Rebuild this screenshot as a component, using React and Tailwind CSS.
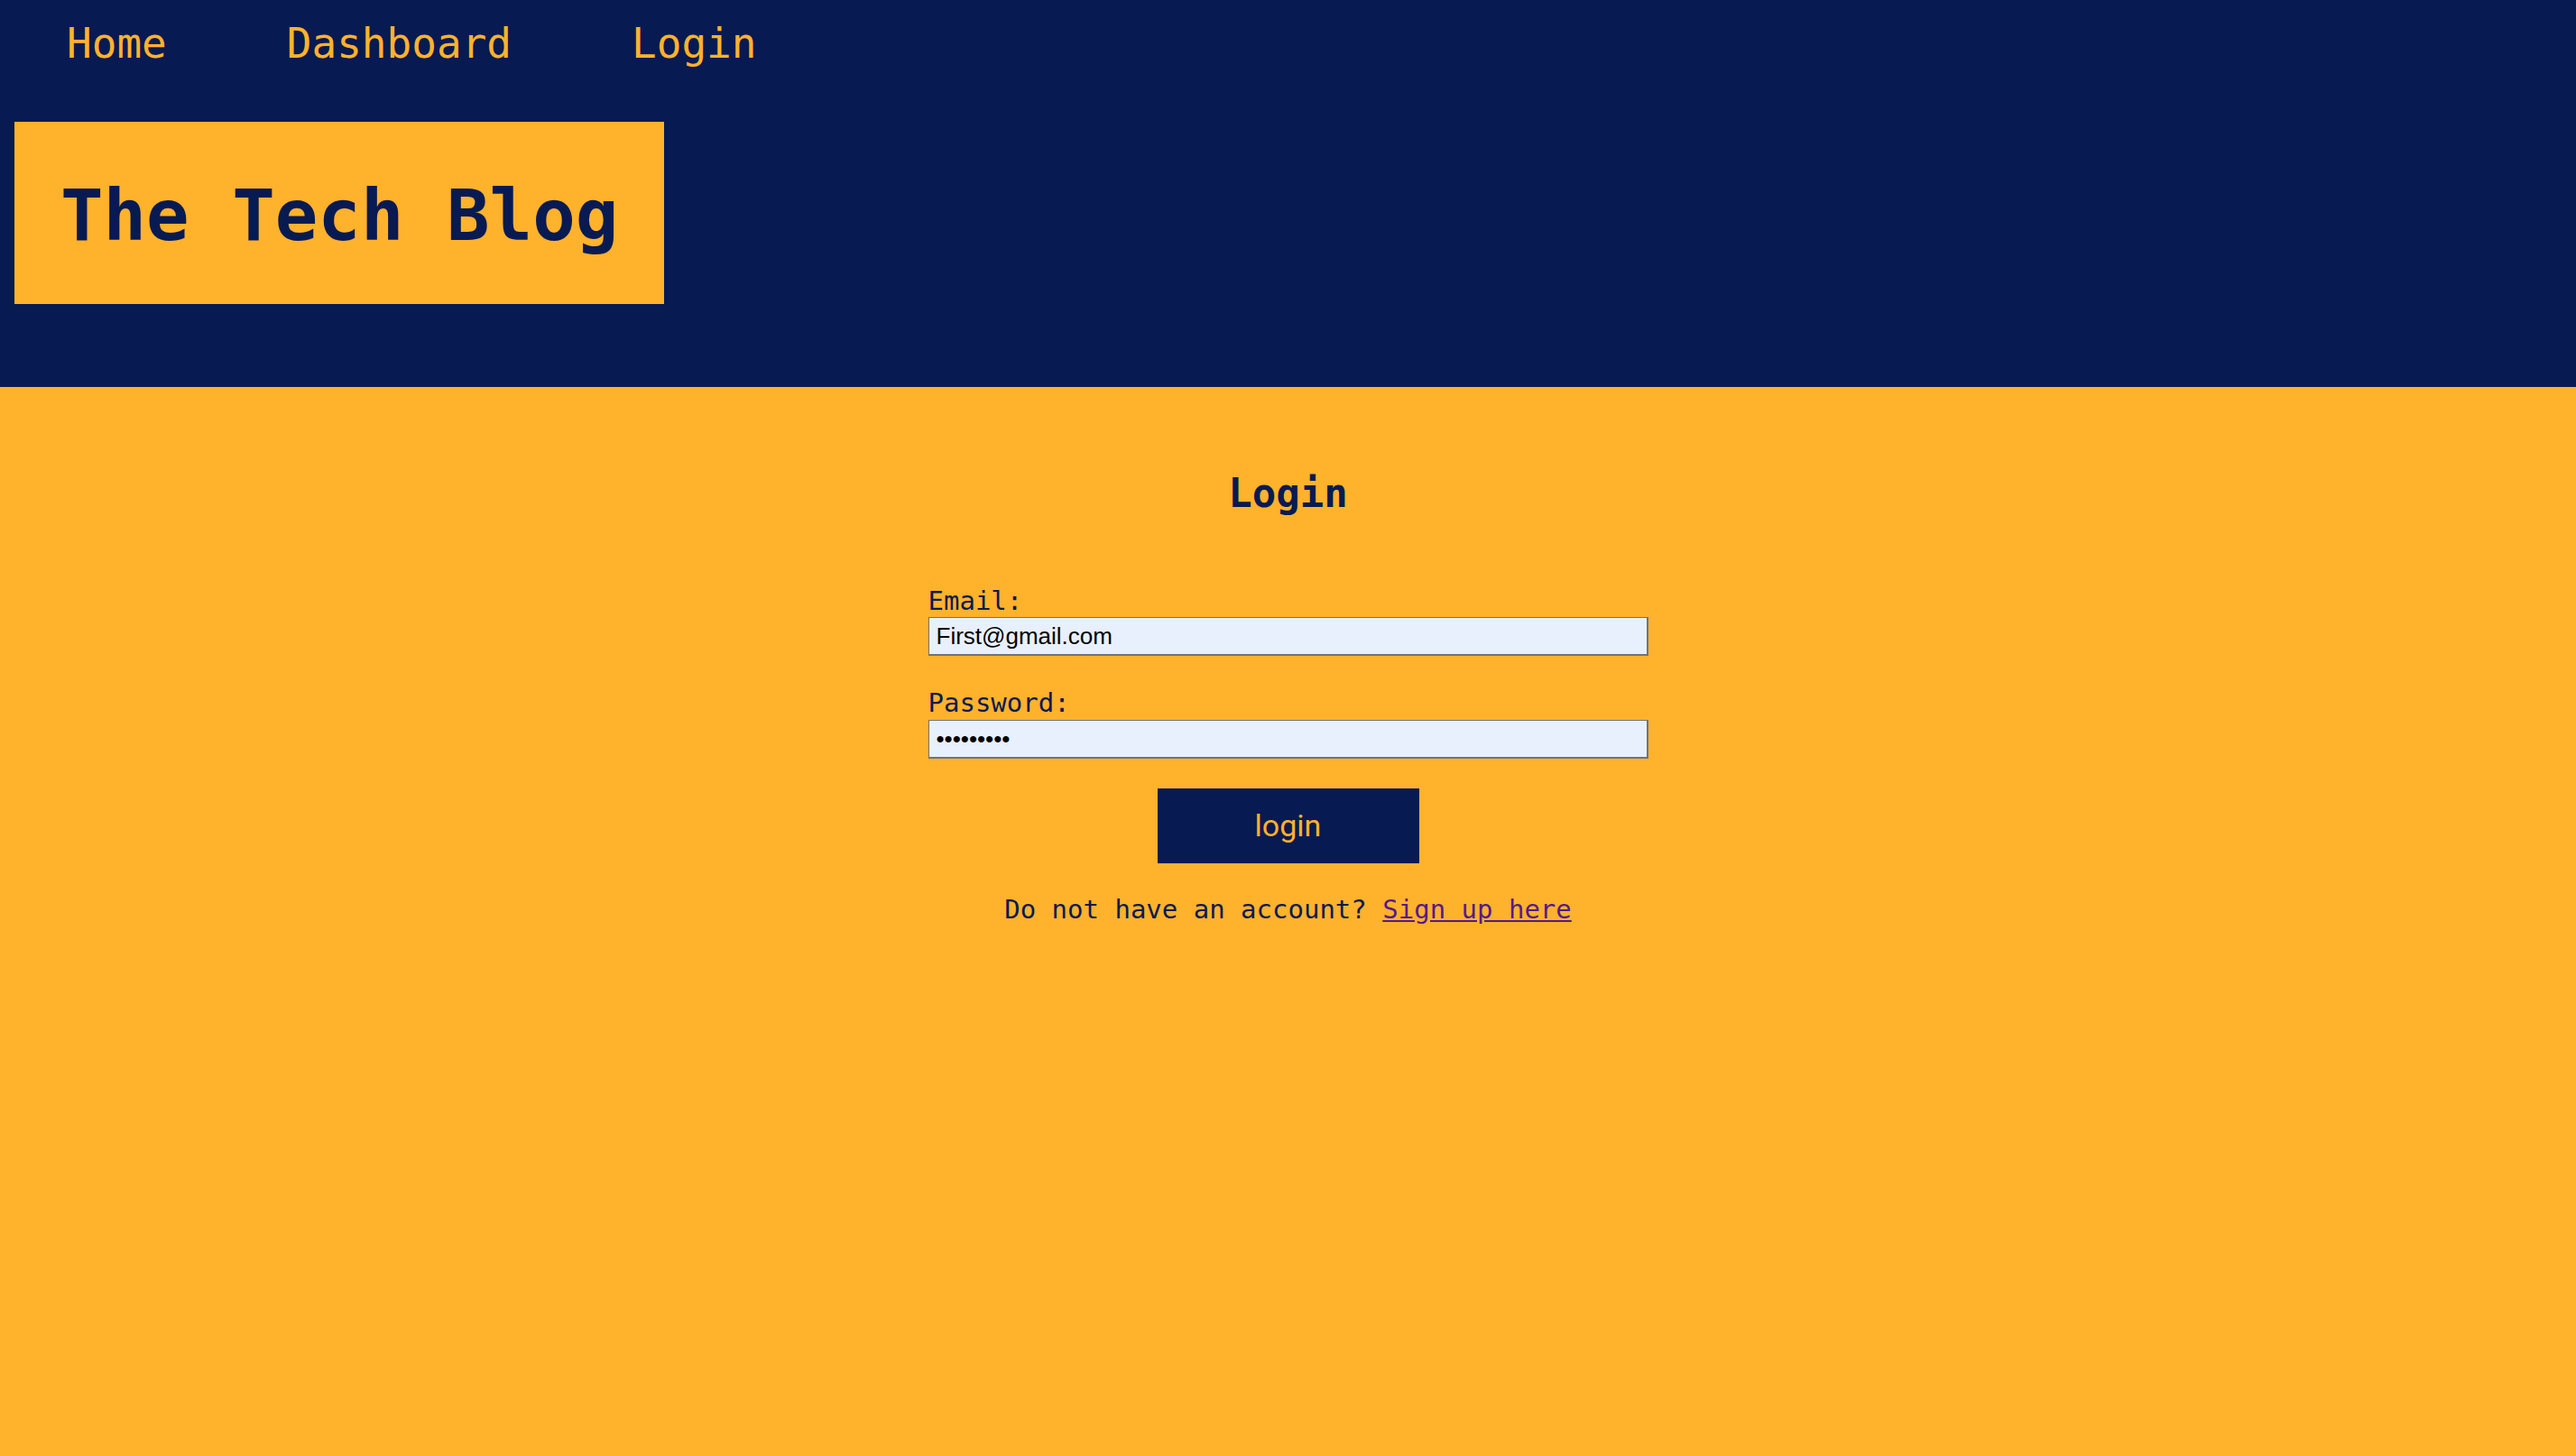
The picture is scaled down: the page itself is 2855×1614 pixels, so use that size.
const navLinks = ['Home', 'Dashboard', 'Login'];

const App = () => {
      return (
            <div className="min-h-screen bg-[#ffb22c] font-['DejaVu_Sans_Mono',monospace] text-[#081a52]">
                  <header className="h-[429px] bg-[#081a52] pt-[22px]">
                        <nav className="flex gap-[133px] pl-[74px] text-[46px] leading-[52px] text-[#ffb22c]">
                              {navLinks.map((link) => (
                                    <a key={link} href="#" className="hover:underline">
                                          {link}
                                    </a>
                              ))}
                        </nav>
                        <div className="ml-[16px] mt-[61px] h-[202px] w-[720px] bg-[#ffb22c] pl-[51px] pt-[58px]">
                              <h1 className="text-[79px] font-bold leading-[92px] text-[#081a52]">The Tech Blog</h1>
                        </div>
                  </header>

                  <main className="flex flex-col items-center pt-[92px]">
                        <h2 className="text-[44px] font-bold leading-[51px]">Login</h2>

                        <form className="mt-[77px] flex w-[798px] flex-col" onSubmit={(e) => e.preventDefault()}>
                              <label htmlFor="email" className="text-[29px] leading-[34px]">Email:</label>
                              <input
                                    id="email"
                                    type="email"
                                    defaultValue="First@gmail.com"
                                    className="mt-[1px] h-[43px] w-full border-t border-l border-r-2 border-b-2 border-[#6f737a] bg-[#e8f0fe] pl-[8px] font-['Liberation_Sans',Arial,sans-serif] text-[26px] text-black outline-none"
                              />

                              <label htmlFor="password" className="mt-[35px] text-[29px] leading-[34px]">Password:</label>
                              <input
                                    id="password"
                                    type="password"
                                    defaultValue="123456789"
                                    className="mt-[2px] h-[43px] w-full border-t border-l border-r-2 border-b-2 border-[#6f737a] bg-[#e8f0fe] pl-[8px] font-['Liberation_Sans',Arial,sans-serif] text-[26px] text-black outline-none"
                              />

                              <button
                                    type="submit"
                                    className="mt-[33px] h-[83px] w-[290px] self-center bg-[#081a52] font-['Roboto',sans-serif] text-[34px] text-[#ffb22c]"
                              >
                                    login
                              </button>

                              <p className="mt-[34px] text-center text-[29px] leading-[34px]">
                                    Do not have an account?{' '}
                                    <a href="#" className="text-[#551a8b] underline">Sign up here</a>
                              </p>
                        </form>
                  </main>
            </div>
      );
};

export default App;
